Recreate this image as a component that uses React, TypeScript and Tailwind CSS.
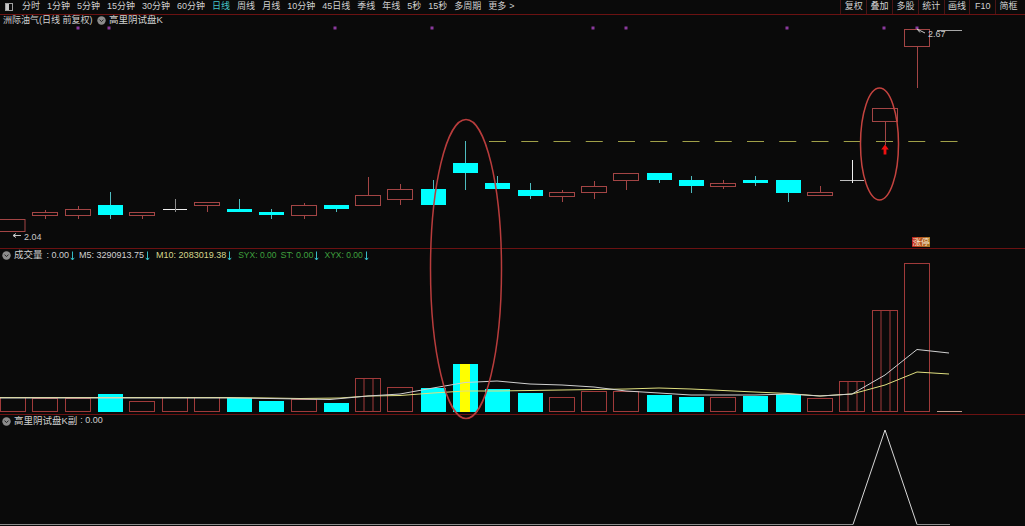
import React from 'react';

const font = "font-['Liberation_Sans','Noto_Sans_CJK_SC',sans-serif]";

const periods = ['分时', '1分钟', '5分钟', '15分钟', '30分钟', '60分钟', '日线', '周线', '月线', '10分钟', '45日线', '季线', '年线', '5秒', '15秒', '多周期', '更多'];
const tools = ['复权', '叠加', '多股', '统计', '画线', 'F10', '简框'];

// x, body top, body bottom, wick top, wick bottom
const redCandles = [
  [45, 212.5, 215.5, 210, 219],
  [78, 209.5, 215.5, 206, 219],
  [142, 212.5, 215.5, 212, 219],
  [207, 202.5, 205.5, 202, 212],
  [304, 205.5, 215.5, 203, 219],
  [368, 195.5, 205.5, 177, 206],
  [400, 189.5, 199.5, 184, 205],
  [562, 192.5, 196.5, 190, 202],
  [594, 186.5, 192.5, 181, 199],
  [626, 173.5, 180.5, 173, 190],
  [723, 183.5, 186.5, 180, 189],
  [820, 192.5, 195.5, 186, 196],
  [885, 108.5, 121.5, 108, 145],
  [917, 29.5, 46.5, 47, 88],
];

const cyanCandles = [
  [110, 205, 215, 192, 219],
  [239, 209, 212, 199, 212],
  [271, 212, 215, 209, 219],
  [336, 205, 209, 205, 212],
  [433, 189, 205, 180, 205],
  [465, 163, 173, 141, 190],
  [497, 183, 189, 176, 189],
  [530, 190, 196, 183, 199],
  [659, 173, 180, 173, 183],
  [691, 180, 186, 176, 193],
  [755, 180, 183, 176, 186],
  [788, 180, 193, 180, 202],
];

const redVolumes = [
  [13, 397.5], [45, 398.5], [78, 398.5], [142, 401.5], [175, 397.5], [207, 397.5], [304, 399.5],
  [368, 378.5], [400, 387.5], [562, 397.5], [594, 391.5], [626, 391.5], [723, 397.5], [820, 398.5],
  [852, 381.5], [885, 310.5], [917, 263.5],
];
const cyanVolumes = [
  [110, 394], [239, 398], [271, 401], [336, 403], [433, 388], [465, 364], [497, 389], [530, 393],
  [659, 395], [691, 397], [755, 396], [788, 394],
];
// doubled inner lines on the heavy volume days
const triple = [368, 852, 885];

const m5 = '0,398 230,398 270,398.5 300,399 330,399.5 368,396 400,394 433,388 465,382.5 497,381 530,384 562,385 594,387 626,391 659,393 691,395 723,395 755,395 788,394 820,396 852,394 885,375 917,349.5 949,353';
const m10 = '0,397.5 230,397.5 270,398 300,398.5 340,398 368,396 400,395.5 433,393 465,391 497,391 530,390.5 594,389.5 626,389 659,388 691,389 723,390.5 755,392 788,393.5 820,396 852,394 885,385 917,372 949,374';

const dots = [78, 109, 335, 432, 593, 626, 787, 884, 917];
const dashes = Array.from({ length: 15 }, (_, i) => 489 + i * 32.25);

function Chevron() {
  return (
    <svg viewBox="0 0 9 9" className="w-[9px] h-[9px] shrink-0">
      <circle cx="4.5" cy="4.5" r="4.2" className="fill-[#8c8c8c]" />
      <path d="M2.5 3.6 L4.5 5.6 L6.5 3.6" className="fill-none stroke-[#222222] stroke-1" />
    </svg>
  );
}

function DownArrow() {
  return (
    <svg viewBox="0 0 5 10" className="w-[5px] h-[10px] shrink-0">
      <path d="M2.5 0.5 V9 M0.8 6.8 L2.5 9 L4.2 6.8" className="fill-none stroke-[#35bcc4] stroke-1" />
    </svg>
  );
}

function Toolbar() {
  return (
    <div className="flex items-center justify-between h-[15px] shrink-0 border-b border-[#6b1212] text-[9px] text-[#d0d0d0]">
      <div className="flex items-center gap-[7px] pl-[5px] whitespace-nowrap">
        <svg viewBox="0 0 8 8" className="w-[8px] h-[8px] mr-[2px]">
          <rect x="0.5" y="0.5" width="7" height="7" className="fill-none stroke-[#a0a0a0] stroke-1" />
          <rect x="1" y="1" width="3" height="6" className="fill-[#c8c8c8]" />
        </svg>
        {periods.map((p) => (
          <span key={p} className={p === '日线' ? 'text-[#45c4c8]' : ''}>{p}</span>
        ))}
        <span className="-ml-[4px]">&gt;</span>
      </div>
      <div className="flex h-full pr-[4px]">
        {tools.map((t) => (
          <span key={t} className="flex items-center justify-center w-[25.8px] h-full border-l border-[#4a1515]">{t}</span>
        ))}
      </div>
    </div>
  );
}

function PricePanel() {
  return (
    <div className="flex flex-col h-[234px] shrink-0 border-b border-[#6b1212]">
      <div className="flex items-center h-[11px] pl-[3px] text-[9px] text-[#d0d0d0] whitespace-nowrap">
        <span className="w-[94px]">洲际油气(日线 前复权)</span>
        <Chevron />
        <span className="ml-[3px] text-[9.5px]">高里阴试盘K</span>
      </div>
      <svg viewBox="0 26 1025 222" className="block w-[1025px] h-[222px]">
        {dots.map((x) => (
          <rect key={x} x={x - 1.5} y={26.5} width="3" height="3" className="fill-[#8b3a9e]" />
        ))}

        {dashes.map((x) => (
          <line key={x} x1={x} x2={x + 17} y1="141.5" y2="141.5" className="stroke-[#a0a048] stroke-1" />
        ))}

        <rect x="-1" y="219.5" width="26" height="12" className="fill-none stroke-[#a34545] stroke-1" />

        {redCandles.map(([x, top, bot, wt, wb]) => (
          <g key={x}>
            <line x1={x + 0.5} x2={x + 0.5} y1={wt} y2={wb} className="stroke-[#a34545] stroke-1" />
            <rect x={x - 12.5} y={top} width="25" height={bot - top} className="fill-[#0a0a0a] stroke-[#a34545] stroke-1" />
          </g>
        ))}

        {cyanCandles.map(([x, top, bot, wt, wb]) => (
          <g key={x}>
            <line x1={x + 0.5} x2={x + 0.5} y1={wt} y2={wb} className="stroke-[#4fbcc0] stroke-1" />
            <rect x={x - 12} y={top} width="25" height={bot - top} className="fill-[#00ffff]" />
          </g>
        ))}

        {/* doji days */}
        <line x1="163" x2="187" y1="209.5" y2="209.5" className="stroke-[#f0f0f0] stroke-1" />
        <line x1="175.5" x2="175.5" y1="199" y2="212" className="stroke-[#8c8c8c] stroke-1" />
        <line x1="840" x2="864" y1="180.5" y2="180.5" className="stroke-[#bdbdbd] stroke-1" />
        <line x1="852.5" x2="852.5" y1="160" y2="183" className="stroke-[#f0f0f0] stroke-1" />
        <line x1="937" x2="962" y1="30.5" y2="30.5" className="stroke-[#a8a8a8] stroke-1" />

        {/* low and high labels */}
        <path d="M13 235.5 H21 M13 235.5 L16 233.5 M13 235.5 L16 237.5" className="fill-none stroke-[#c8c8c8] stroke-1" />
        <text x="24" y="239.5" className="fill-[#c8c8c8] text-[9px]">2.04</text>
        <path d="M917 29 L925 33 M917 29 L920 32.5" className="fill-none stroke-[#c8c8c8] stroke-1" />
        <text x="928" y="37" className="fill-[#c8c8c8] text-[9px]">2.67</text>

        <path d="M885 144.5 L888.8 149.5 H886.4 V154.5 H883.6 V149.5 H881.2 Z" className="fill-[#f01010]" />

        <ellipse cx="879.5" cy="144" rx="19" ry="56" className="fill-none stroke-[#c4433f] stroke-[1.5px]" />
      </svg>
      <span className="absolute left-[912px] top-[237px] w-[18px] h-[10px] leading-[10px] text-center text-[8.5px] text-[#f4e6d0] bg-linear-to-r from-[#c01818] to-[#a87a28]">涨停</span>
    </div>
  );
}

function VolumePanel() {
  return (
    <div className="flex flex-col h-[166px] shrink-0 border-b border-[#6b1212]">
      <div className="flex items-center h-[13px] pl-[2px] text-[9px] text-[#d0d0d0] whitespace-nowrap">
        <Chevron />
        <span className="ml-[3px] text-[9.5px]">成交量</span>
        <span className="ml-[4px]">: 0.00</span>
        <span className="ml-[1px]"><DownArrow /></span>
        <span className="ml-[4px]">M5: 3290913.75</span>
        <span className="ml-[1px]"><DownArrow /></span>
        <span className="ml-[6px] text-[#d6d68c]">M10: 2083019.38</span>
        <span className="ml-[1px]"><DownArrow /></span>
        <span className="ml-[6px] text-[8.5px] text-[#3fa03f]">SYX: 0.00</span>
        <span className="ml-[4px] text-[#3fa03f]">ST: 0.00</span>
        <span className="ml-[1px]"><DownArrow /></span>
        <span className="ml-[5px] text-[8.5px] text-[#3fa03f]">XYX: 0.00</span>
        <span className="ml-[1px]"><DownArrow /></span>
      </div>
      <svg viewBox="0 262 1025 152" className="block w-[1025px] h-[152px]">
        {cyanVolumes.map(([x, top]) => (
          <rect key={x} x={x - 12} y={top} width="25" height={412 - top} className="fill-[#00ffff]" />
        ))}
        <rect x="460" y="364" width="10" height="48" className="fill-[#ffff00]" />

        {redVolumes.map(([x, top]) => (
          <rect key={x} x={x - 12.5} y={top} width="25" height={411.5 - top} className="fill-none stroke-[#a03a3a] stroke-1" />
        ))}
        {triple.map((x) => (
          <g key={x}>
            <line x1={x - 4} x2={x - 4} y1={x === 885 ? 310 : x === 368 ? 378 : 381} y2="412" className="stroke-[#a03a3a] stroke-1" />
            <line x1={x + 5} x2={x + 5} y1={x === 885 ? 310 : x === 368 ? 378 : 381} y2="412" className="stroke-[#a03a3a] stroke-1" />
          </g>
        ))}
        <line x1="937" x2="962" y1="411.5" y2="411.5" className="stroke-[#c09a8a] stroke-1" />

        <polyline points={m10} className="fill-none stroke-[#e0e080] stroke-1" />
        <polyline points={m5} className="fill-none stroke-[#d0d0d0] stroke-1" />
      </svg>
    </div>
  );
}

function SubPanel() {
  return (
    <div className="flex flex-col flex-1 min-h-0">
      <div className="flex items-center h-[12px] pl-[2px] text-[9px] text-[#d0d0d0] whitespace-nowrap">
        <Chevron />
        <span className="ml-[3px] text-[9.5px]">高里阴试盘K副</span>
        <span className="ml-[3px]">: 0.00</span>
      </div>
      <svg viewBox="0 427 1025 99" className="block w-[1025px] h-[99px]">
        <polyline points="0,524.5 853,524.5" className="fill-none stroke-[#8c8c8c] stroke-1" />
        <polyline points="853,524.5 885,430 917,524.5" className="fill-none stroke-[#d8d8d8] stroke-1" />
        <polyline points="917,524.5 950,524.5" className="fill-none stroke-[#8c8c8c] stroke-1" />
      </svg>
    </div>
  );
}

export default function App() {
  return (
    <div className={`relative flex flex-col w-[1025px] h-[526px] overflow-hidden bg-[#0a0a0a] ${font}`}>
      <Toolbar />
      <PricePanel />
      <VolumePanel />
      <SubPanel />
      {/* hand drawn mark that crosses the price and volume panels */}
      <svg viewBox="0 0 74 302" className="absolute left-[429px] top-[117.5px] w-[74px] h-[302px]">
        <ellipse cx="37" cy="151" rx="35.5" ry="149.5" className="fill-none stroke-[#b83c3c] stroke-[1.5px]" />
      </svg>
    </div>
  );
}
